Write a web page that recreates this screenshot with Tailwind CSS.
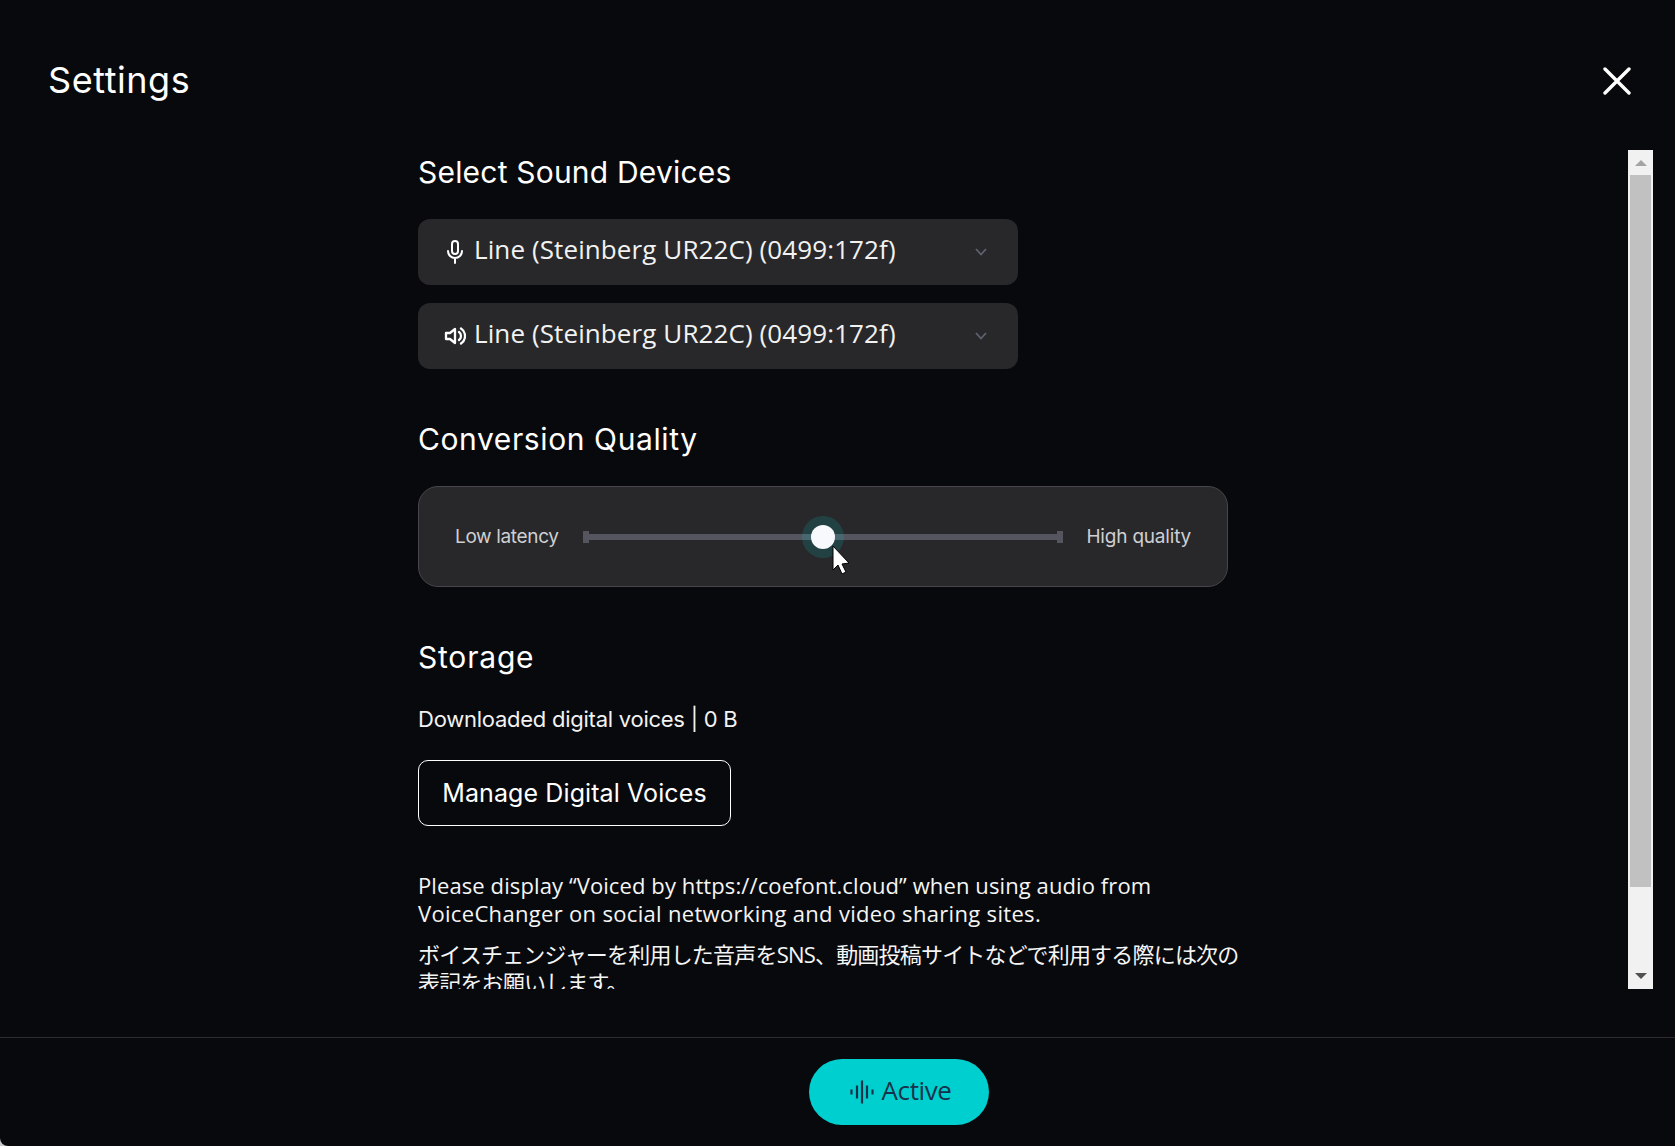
<!DOCTYPE html>
<html lang="en">
<head>
<meta charset="utf-8">
<script src="https://cdn.jsdelivr.net/npm/@tailwindcss/browser@4"></script>
</head>
<body class="bg-[#c8c8c8] m-0">
<div class="w-[1675px] h-[1146px] flex flex-col overflow-hidden rounded-bl-[8px] bg-[#08090c] text-white font-['Inter',sans-serif]">
  <header class="h-[150px] shrink-0 flex items-start justify-between pl-[48px] pr-[44px] pt-[56px]">
    <h1 class="text-[36px] leading-[48px] font-normal tracking-[0.55px] text-white">Settings</h1>
    <svg class="mt-[11px]" width="28" height="28" viewBox="0 0 28 28" fill="none" stroke="#ffffff" stroke-width="3.4" stroke-linecap="round"><path d="M2 2 L26 26 M26 2 L2 26"/></svg>
  </header>
  <div class="h-[839px] shrink-0 flex pr-[22px]">
    <main class="flex-1 h-full overflow-hidden pl-[418px] pt-[3px]">
      <h2 class="text-[30px] leading-[38px] font-normal tracking-[0.2px] text-white">Select Sound Devices</h2>
      <div class="mt-[28px] w-[600px] h-[66px] rounded-[12px] bg-[#28282b] flex items-center pl-[26px] pr-[30px]">
        <svg width="22" height="24" viewBox="0 0 22 24" fill="none" stroke="#ffffff" stroke-width="2" stroke-linecap="round"><rect x="8" y="1" width="6" height="13" rx="3"/><path d="M4 11 a7 7 0 0 0 14 0 M11 18 V23"/></svg>
        <span class="ml-[8px] flex-1 text-[26px] leading-[32px] -mt-[6px] font-['Open_Sans',sans-serif] tracking-[0.1px] text-[#f2f2f2]">Line (Steinberg UR22C) (0499:172f)</span>
        <svg width="14" height="10" viewBox="0 0 14 10" fill="none" stroke="#5d6270" stroke-width="1.8"><path d="M2 2 L7 7.5 L12 2"/></svg>
      </div>
      <div class="mt-[18px] w-[600px] h-[66px] rounded-[12px] bg-[#28282b] flex items-center pl-[26px] pr-[30px]">
        <svg width="22" height="24" viewBox="0 0 22 24" fill="none" stroke="#ffffff" stroke-width="2.3" stroke-linejoin="round" stroke-linecap="round"><path d="M2 9 H6 L11 5 V19 L6 15 H2 Z"/><path d="M15 8 a5 5 0 0 1 0 8 M17 4.5 a9 9 0 0 1 0 15"/></svg>
        <span class="ml-[8px] flex-1 text-[26px] leading-[32px] -mt-[6px] font-['Open_Sans',sans-serif] tracking-[0.1px] text-[#f2f2f2]">Line (Steinberg UR22C) (0499:172f)</span>
        <svg width="14" height="10" viewBox="0 0 14 10" fill="none" stroke="#5d6270" stroke-width="1.8"><path d="M2 2 L7 7.5 L12 2"/></svg>
      </div>
      <h2 class="mt-[51px] text-[30px] leading-[38px] font-normal tracking-[0.6px] text-white">Conversion Quality</h2>
      <div class="mt-[28px] w-[810px] h-[101px] rounded-[20px] bg-[#28282b] border border-[#47474b] flex items-center pl-[36px] pr-[36px]">
        <span class="text-[19px] tracking-[-0.35px] w-[128px] shrink-0 text-[#cfcfd2] mt-[1px]">Low latency</span>
        <div class="relative w-[480px] h-[12px] flex items-center justify-between shrink-0">
          <span class="absolute left-0 right-0 top-[3px] h-[6px] bg-[#55555f]"></span>
          <span class="relative w-[6px] h-[12px] bg-[#55555f]"></span>
          <span class="relative w-[6px] h-[12px] bg-[#55555f]"></span>
          <span class="absolute left-[240px] top-[6px] -translate-x-1/2 -translate-y-1/2 w-[42px] h-[42px] rounded-full bg-[#00cfcf]/15"></span>
          <span class="absolute left-[240px] top-[6px] -translate-x-1/2 -translate-y-1/2 w-[24px] h-[24px] rounded-full bg-[#f8f9fc]"></span>
          <svg class="absolute left-[247px] top-[14px]" width="20" height="30" viewBox="0 0 20 30"><path d="M3 1 V25 L8 20 L12 29 L16 27 L12 19 L19 18 Z" fill="#ffffff" stroke="#000000" stroke-width="1"/></svg>
        </div>
        <span class="ml-auto text-[19px] tracking-[-0.2px] text-[#cfcfd2] mt-[1px]">High quality</span>
      </div>
      <h2 class="mt-[51px] text-[30px] leading-[38px] font-normal tracking-[0.8px] text-white">Storage</h2>
      <p class="mt-[27px] text-[22px] leading-[32px] tracking-[-0.25px] text-[#f2f2f2]">Downloaded digital voices | 0 B</p>
      <button class="mt-[25px] block w-[313px] h-[66px] rounded-[10px] border border-white bg-transparent text-white text-[25px] tracking-[0.1px] pt-[1px]">Manage Digital Voices</button>
      <div class="mt-[45px] w-[840px] whitespace-nowrap font-['Open_Sans','Noto_Sans_CJK_JP',sans-serif] text-[#f5f5f5]">
        <p class="text-[22px] leading-[28px] tracking-[0.1px]">Please display “Voiced by https://coefont.cloud” when using audio from<br><span class="tracking-[0.32px]">VoiceChanger on social networking and video sharing sites.</span></p>
        <p class="mt-[13px] text-[22px] leading-[28px] tracking-[-0.8px]">ボイスチェンジャーを利用した音声をSNS、動画投稿サイトなどで利用する際には次の<br>表記をお願いします。</p>
      </div>
    </main>
    <div class="w-[25px] h-full shrink-0 bg-[#f1f1f1] flex flex-col items-center">
      <div class="h-[25px] w-full flex items-center justify-center">
        <svg width="12" height="6" viewBox="0 0 12 6"><path d="M0 6 L6 0 L12 6 Z" fill="#a3a3a3"/></svg>
      </div>
      <div class="w-[21px] h-[712px] bg-[#c1c1c1]"></div>
      <div class="flex-1 w-full flex items-end justify-center pb-[10px]">
        <svg width="12" height="6" viewBox="0 0 12 6"><path d="M0 0 L12 0 L6 6 Z" fill="#505050"/></svg>
      </div>
    </div>
  </div>
  <div class="mt-[48px] border-t border-[#2c2c2f] flex-1 flex justify-center pt-[21px] pl-[123px]">
    <button class="w-[180px] h-[66px] rounded-full bg-[#00cfcf] flex items-center justify-center gap-[8px] text-[#16324a] pl-[3px]">
      <svg width="24" height="26" viewBox="0 0 24 26" fill="none" stroke="#16324a" stroke-width="2.2"><path d="M1.5 10.5 V15.5 M7 6.5 V19.5 M12 1.5 V24.5 M17 6.5 V19.5 M22.5 10.5 V15.5"/></svg>
      <span class="text-[26px] leading-[32px] -mt-[5px] font-['Open_Sans',sans-serif] tracking-[-0.4px]">Active</span>
    </button>
  </div>
</div>
</body>
</html>
